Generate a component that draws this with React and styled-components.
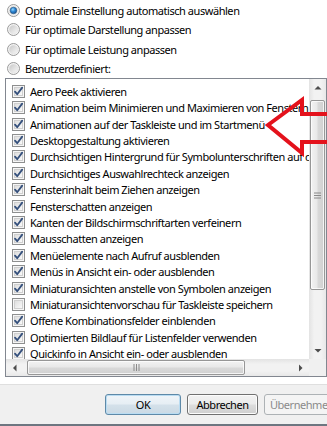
import React from 'react';
import styled, { createGlobalStyle } from 'styled-components';

const Global = createGlobalStyle`
  html, body { margin: 0; padding: 0; background: #fff; }
  body {
    font-family: "Noto Sans", "Liberation Sans", sans-serif;
    font-size: 11px;
    letter-spacing: -0.45px;
    color: #000;
  }
`;

const Window = styled.div`
  position: relative;
  width: 327px;
  height: 426px;
  overflow: hidden;
  display: flex;
  flex-direction: column;
  background: #fff;
`;

const Content = styled.div`
  flex: 1;
  display: flex;
  flex-direction: column;
  padding-left: 5px;
`;

const RadioGroup = styled.div`
  display: flex;
  flex-direction: column;
  padding-top: 1px;
`;

const RadioRow = styled.div`
  height: 19.3px;
  display: flex;
  align-items: center;
  gap: 5px;
  padding-left: 2px;
  white-space: nowrap;
`;

const ListBox = styled.div`
  box-sizing: border-box;
  width: 322px;
  height: 299px;
  border: 1px solid #828790;
  display: grid;
  grid-template-columns: minmax(0, 1fr) 17px;
  grid-template-rows: minmax(0, 1fr) 17px;
  overflow: hidden;
`;

const Viewport = styled.div`
  overflow: hidden;
  padding: 4px 0 0 6px;
  min-width: 0;
`;

const Item = styled.div`
  height: 16.4px;
  display: flex;
  align-items: center;
  gap: 5px;
  white-space: nowrap;
`;

const Glyph = styled.span`
  flex: 0 0 13px;
  width: 13px;
  height: 13px;
  display: block;
  line-height: 0;
`;

const Label = styled.span`
  flex: 0 0 auto;
`;

const VScroll = styled.div`
  display: flex;
  flex-direction: column;
  background: linear-gradient(90deg, #e3e3e3 0%, #f2f2f2 30%, #f2f2f2 70%, #e8e8e8 100%);
`;

const HScroll = styled.div`
  display: flex;
  align-items: stretch;
  min-width: 0;
  background: linear-gradient(180deg, #e3e3e3 0%, #f2f2f2 30%, #f2f2f2 70%, #e8e8e8 100%);
`;

const Corner = styled.div`
  background: #f0f0f0;
`;

const ArrowBtn = styled.div`
  flex: 0 0 17px;
  display: flex;
  align-items: center;
  justify-content: center;
`;

const Track = styled.div`
  flex: 1;
  min-width: 0;
  display: flex;
  flex-direction: ${p => (p.$vertical ? 'column' : 'row')};
  padding: ${p => (p.$vertical ? '4px 1px 0 1px' : '1px 0 1px 4px')};
`;

const Thumb = styled.div`
  box-sizing: border-box;
  flex: 0 0 ${p => p.$size}px;
  border: 1px solid #979797;
  border-radius: 2px;
  background: ${p =>
    p.$vertical
      ? 'linear-gradient(90deg, #f3f3f3 0%, #e9e9e9 45%, #d9d9d9 55%, #d0d0d0 100%)'
      : 'linear-gradient(180deg, #f3f3f3 0%, #e9e9e9 45%, #d9d9d9 55%, #d0d0d0 100%)'};
  box-shadow: inset 0 0 0 1px rgba(255, 255, 255, 0.75);
  display: flex;
  align-items: center;
  justify-content: center;
`;

const Footer = styled.div`
  margin-top: 7px;
  height: 42px;
  box-sizing: border-box;
  background: #f0f0f0;
  border-top: 1px solid #dfdfdf;
  border-bottom: 2px solid #6d7680;
  display: flex;
  gap: 6px;
  padding: 9px 0 0 105px;
  overflow: hidden;
`;

const Button = styled.button`
  flex: 0 0 ${p => p.$w}px;
  height: 21px;
  box-sizing: border-box;
  padding: 0;
  font-family: "Noto Sans", "Liberation Sans", sans-serif;
  font-size: 11px;
  font-weight: 400;
  letter-spacing: -0.45px;
  border-radius: 3px;
  border: 1px solid ${p => (p.disabled ? '#adb2b5' : p.$default ? '#5e89a8' : '#707070')};
  color: ${p => (p.disabled ? '#8a8a8a' : '#000')};
  background: ${p =>
    p.disabled
      ? '#f4f4f4'
      : p.$default
      ? 'linear-gradient(180deg, #f0f5f9 0%, #e6eef4 48%, #d4e1ea 52%, #cad9e4 100%)'
      : 'linear-gradient(180deg, #f2f2f2 0%, #ebebeb 48%, #dddddd 52%, #cfcfcf 100%)'};
  box-shadow: ${p =>
    p.disabled ? 'none' : p.$default ? 'inset 0 0 0 1px #b9dcf2' : 'inset 0 0 0 1px #fcfcfc'};
`;

const Overlay = styled.svg`
  position: absolute;
  left: 0;
  top: 0;
  pointer-events: none;
`;

function Radio({ checked }) {
  return (
    <Glyph>
      <svg width="13" height="13" viewBox="0 0 13 13">
        <defs>
          <linearGradient id="rg" x1="0" y1="0" x2="1" y2="1">
            <stop offset="0" stopColor="#c8c8c8" />
            <stop offset="1" stopColor="#f8f8f8" />
          </linearGradient>
          <radialGradient id="rdot" cx="0.4" cy="0.35" r="0.7">
            <stop offset="0" stopColor="#9ad9ff" />
            <stop offset="0.45" stopColor="#2f8ad6" />
            <stop offset="1" stopColor="#174e8a" />
          </radialGradient>
        </defs>
        <circle cx="6.5" cy="6.5" r="6" fill="#f4f4f4" stroke="#9a9a9a" strokeWidth="1" />
        <circle cx="6.5" cy="6.5" r="4.3" fill="url(#rg)" stroke="#e0e0e0" strokeWidth="0.6" />
        {checked && <circle cx="6.5" cy="6.5" r="3.3" fill="url(#rdot)" stroke="#1f4f7d" strokeWidth="0.5" />}
      </svg>
    </Glyph>
  );
}

function Check({ checked }) {
  return (
    <Glyph>
      <svg width="13" height="13" viewBox="0 0 13 13">
        <defs>
          <linearGradient id="cg" x1="0" y1="0" x2="1" y2="1">
            <stop offset="0" stopColor="#dcdcdc" />
            <stop offset="1" stopColor="#fbfbfb" />
          </linearGradient>
        </defs>
        <rect x="0.5" y="0.5" width="12" height="12" fill="#f6f6f6" stroke="#8e8f8f" />
        <rect x="2.5" y="2.5" width="8" height="8" fill="url(#cg)" stroke="#cfcfcf" />
        {checked && (
          <path
            d="M3 6.6 L5.2 9.2 L10.2 2.6"
            fill="none"
            stroke="#35507c"
            strokeWidth="1.8"
            strokeLinecap="round"
            strokeLinejoin="round"
          />
        )}
      </svg>
    </Glyph>
  );
}

function Tri({ dir }) {
  const pts = {
    up: '0.5,4.5 4,1 7.5,4.5',
    down: '0.5,1 4,4.5 7.5,1',
    left: '4.5,0.5 1,4 4.5,7.5',
    right: '1,0.5 4.5,4 1,7.5',
  }[dir];
  const vert = dir === 'up' || dir === 'down';
  return (
    <svg width={vert ? 8 : 5.5} height={vert ? 5.5 : 8} viewBox={vert ? '0 0 8 5.5' : '0 0 5.5 8'}>
      <polygon points={pts} fill="#4d4d4d" />
    </svg>
  );
}

function Grip({ vertical }) {
  return vertical ? (
    <svg width="7" height="7" viewBox="0 0 7 7">
      {[0.5, 3, 5.5].map(y => (
        <line key={y} x1="0" x2="7" y1={y + 0.5} y2={y + 0.5} stroke="#8a8a8a" />
      ))}
    </svg>
  ) : (
    <svg width="7" height="7" viewBox="0 0 7 7">
      {[0.5, 3, 5.5].map(x => (
        <line key={x} y1="0" y2="7" x1={x + 0.5} x2={x + 0.5} stroke="#8a8a8a" />
      ))}
    </svg>
  );
}

const radios = [
  { label: 'Optimale Einstellung automatisch auswählen', checked: true },
  { label: 'Für optimale Darstellung anpassen' },
  { label: 'Für optimale Leistung anpassen' },
  { label: 'Benutzerdefiniert:' },
];

const items = [
  ['Aero Peek aktivieren', true],
  ['Animation beim Minimieren und Maximieren von Fenstern', true],
  ['Animationen auf der Taskleiste und im Startmenü', true],
  ['Desktopgestaltung aktivieren', true],
  ['Durchsichtigen Hintergrund für Symbolunterschriften auf dem Desktop', true],
  ['Durchsichtiges Auswahlrechteck anzeigen', true],
  ['Fensterinhalt beim Ziehen anzeigen', true],
  ['Fensterschatten anzeigen', true],
  ['Kanten der Bildschirmschriftarten verfeinern', true],
  ['Mausschatten anzeigen', true],
  ['Menüelemente nach Aufruf ausblenden', true],
  ['Menüs in Ansicht ein- oder ausblenden', true],
  ['Miniaturansichten anstelle von Symbolen anzeigen', true],
  ['Miniaturansichtenvorschau für Taskleiste speichern', false],
  ['Offene Kombinationsfelder einblenden', true],
  ['Optimierten Bildlauf für Listenfelder verwenden', true],
  ['Quickinfo in Ansicht ein- oder ausblenden', true],
];

export default function App() {
  return (
    <>
      <Global />
      <Window>
        <Content>
          <RadioGroup>
            {radios.map(r => (
              <RadioRow key={r.label}>
                <Radio checked={r.checked} />
                <Label>{r.label}</Label>
              </RadioRow>
            ))}
          </RadioGroup>
          <ListBox>
            <Viewport>
              {items.map(([label, on]) => (
                <Item key={label}>
                  <Check checked={on} />
                  <Label>{label}</Label>
                </Item>
              ))}
            </Viewport>
            <VScroll>
              <ArrowBtn><Tri dir="up" /></ArrowBtn>
              <Track $vertical>
                <Thumb $vertical $size={190}><Grip vertical /></Thumb>
              </Track>
              <ArrowBtn><Tri dir="down" /></ArrowBtn>
            </VScroll>
            <HScroll>
              <ArrowBtn><Tri dir="left" /></ArrowBtn>
              <Track>
                <Thumb $size={218}><Grip /></Thumb>
              </Track>
              <ArrowBtn><Tri dir="right" /></ArrowBtn>
            </HScroll>
            <Corner />
          </ListBox>
        </Content>
        <Footer>
          <Button $w={76} $default>OK</Button>
          <Button $w={71}>Abbrechen</Button>
          <Button $w={76} disabled>Übernehmen</Button>
        </Footer>
        <Overlay width="327" height="426" viewBox="0 0 327 426">
          <path
            d="M268 125 L302 100 L302 114 L332 114 L332 142 L302 142 L302 153 Z"
            fill="none"
            stroke="#e4121c"
            strokeWidth="4"
            strokeLinejoin="miter"
          />
        </Overlay>
      </Window>
    </>
  );
}
